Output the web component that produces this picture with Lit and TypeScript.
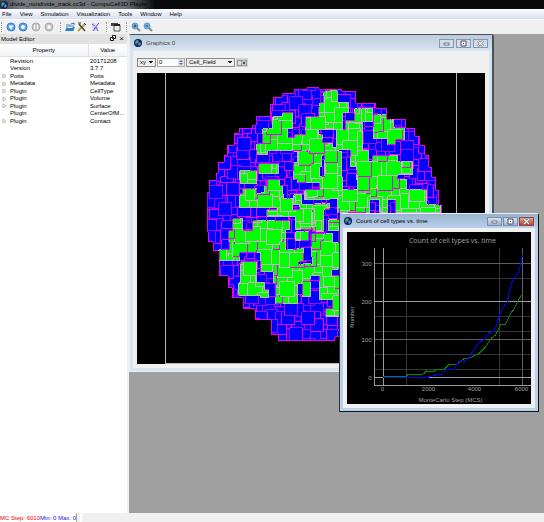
import { LitElement, html, svg, css } from "lit";
import { customElement } from "lit/decorators.js";

type Rect = [number, number, number, number];

// Green cell clusters as x1, y1, x2, y2 in lattice units.
const GREEN: Rect[] = [
  [283,113,293,129],[273,117,283,129],[263,129,288,150],[257,144,268,155],[268,138,297,151],[295,135,307,152],
  [306,117,319,135],[319,107,330,130],[324,92,330,108],[307,135,323,150],[298,152,320,183],[308,143,322,167],
  [294,163,300,180],[259,164,279,174],[240,171,257,184],[267,180,280,186],[265,186,283,195],[243,189,257,197],
  [240,194,261,208],[261,193,277,208],[277,195,284,210],[283,199,293,210],[294,195,302,205],[300,205,315,210],
  [315,204,330,210],[305,190,330,200],[325,91,338,103],[320,103,349,113],[320,113,343,130],[355,109,373,122],
  [346,121,363,133],[337,130,363,150],[374,115,394,128],[374,127,388,139],[388,128,405,140],[388,140,396,145],
  [320,143,333,156],[325,152,342,177],[332,148,339,155],[320,177,343,190],[351,150,369,167],[357,162,373,180],
  [373,156,398,180],[398,162,413,175],[358,180,407,190],[347,190,370,213],[370,190,427,200],[396,200,427,213],
  [427,205,441,213],[338,195,347,213],[320,190,347,199],[380,200,388,213],[267,210,312,217],[233,219,243,232],
  [229,231,257,242],[230,242,261,253],[219,250,240,261],[253,221,290,230],[253,229,286,241],[258,235,286,253],
  [261,250,299,272],[296,217,312,230],[296,232,309,241],[313,210,324,232],[312,234,333,257],[329,220,340,231],
  [313,243,340,270],[274,265,303,284],[276,284,298,304],[303,264,311,297],[307,265,332,276],[320,276,340,300],
  [326,309,340,317],[333,298,340,310],[241,262,257,283],[239,283,265,296],[261,290,269,298],[297,249,304,262],
];

// Stepped silhouette of the colony: from row y on, the edge is at x.
const LEFT = [[87,307],[89,294],[93,282],[97,273],[104,270],[116,256],[125,252],[128,239],[133,234],[145,227],[155,224],[162,218],[173,216],[180,209],[192,207],[232,208],[242,213],[251,219],[276,228],[288,232],[298,243],[309,255],[320,271],[335,278]];
const RIGHT = [[87,318],[89,341],[91,355],[103,375],[108,386],[119,405],[128,414],[136,419],[145,424],[155,428],[167,431],[177,435],[190,438],[205,441],[260,436],[290,420],[310,395],[325,365],[337,334]];
const edge = (t: number[][], y: number) => {
  let x = t[0][1];
  for (const s of t) if (y >= s[0]) x = s[1];
  return x;
};

const X0 = 200, Y0 = 84, W = 246, H = 260;

// Lays blocks of one size over the lattice in random order; the last one on a pixel owns it.
function blocks(step: number, size: number, seed: number) {
  const rnd = () => ((seed = (seed * 16807) % 2147483647) / 2147483647);
  const all: Rect[] = [];
  for (let y = -step; y < H; y += step)
    for (let x = -step; x < W; x += step) {
      const px = Math.round(x + rnd() * 4), py = Math.round(y + rnd() * 4);
      all.push([px, py, px + size, py + size]);
    }
  for (let i = all.length - 1; i > 0; i--) {
    const j = Math.floor(rnd() * (i + 1));
    [all[i], all[j]] = [all[j], all[i]];
  }
  const own = new Int32Array(W * H);
  all.forEach((b, n) => {
    for (let y = Math.max(0, b[1]); y < Math.min(H, b[3]); y++)
      for (let x = Math.max(0, b[0]); x < Math.min(W, b[2]); x++) own[y * W + x] = n;
  });
  return own;
}

function colony() {
  const blue = blocks(9, 13, 7), green = blocks(11, 15, 21);
  const id = new Int32Array(W * H).fill(-1);
  for (let y = 0; y < H; y++) {
    const ay = y + Y0;
    if (ay < 87 || ay > 340) continue;
    const l = edge(LEFT, ay), r = edge(RIGHT, ay);
    for (let x = Math.max(0, l - X0); x < W && x + X0 <= r; x++) {
      const ax = x + X0, n = y * W + x;
      const g = GREEN.some((q) => ax >= q[0] && ax < q[2] && ay >= q[1] && ay < q[3]);
      id[n] = g ? green[n] * 2 + 1 : blue[n] * 2;
    }
  }
  const at = (x: number, y: number) => (x < 0 || y < 0 || x >= W || y >= H ? -1 : id[y * W + x]);
  const paths = ["", "", "", "", ""];
  for (let y = 0; y < H; y++) {
    let run = -1, start = 0;
    for (let x = 0; x <= W; x++) {
      let c = -1;
      const a = at(x, y);
      if (x < W && a >= 0) {
        c = a & 1;
        const near = [at(x + 1, y), at(x, y + 1)];
        if (at(x - 1, y) < 0) near.push(-1);
        if (at(x, y - 1) < 0) near.push(-1);
        const other = near.find((v) => v !== a);
        if (other !== undefined) {
          if (other < 0) c = 2;
          else if (a & 1) c = (a >> 1) % 6 ? 4 : 2;
          else if (other & 1) c = (a >> 1) % 2 ? 4 : 2;
          else c = (a >> 1) % 2 ? 3 : 2;
        }
      }
      if (c !== run) {
        if (run >= 0) paths[run] += `M${start + X0} ${y + Y0}h${x - start}v1h${start - x}z`;
        run = c;
        start = x;
      }
    }
  }
  const fills = ["#0000ff", "#00ff00", "#f000f0", "#9c08f0", "#c8b0c4"];
  return paths.map((d, i) => svg`<path d=${d} fill=${fills[i]}></path>`);
}
const COLONY = colony();

const globe = html`<svg class="globe" viewBox="0 0 8 8" aria-hidden="true"><circle cx="4" cy="4" r="4" fill="#0b2358"/><path d="M1 3l2-2 2 1-1 2-2 1z" fill="#4fae6c"/><path d="M4 5l2-2 1 2-2 2z" fill="#5d93da"/><circle cx="2" cy="5" r="1" fill="#2a6ec0"/></svg>`;

const round = (fill: string, ring: string, glyph: unknown) =>
  svg`<circle cx="5" cy="5" r="4" fill=${fill} stroke=${ring}></circle>${glyph}`;

const TOOLS: { name: string; start?: boolean; art: unknown }[] = [
  { name: "Play", start: true, art: round("#5a9ff2", "#3a7dd8", svg`<path d="M2.500 3.500h5L5 8z" fill="#fff"/>`) },
  { name: "Step", art: round("#5a9ff2", "#3a7dd8", svg`<circle cx="5" cy="5" r="2" fill="#fff"/>`) },
  { name: "Pause", art: round("#c6c6c6", "#ababab", svg`<path d="M3 3h1v4H3zM6 3h1v4H6z" fill="#fff"/>`) },
  { name: "Stop", art: round("#c6c6c6", "#ababab", svg`<rect x="3.500" y="3.500" width="3" height="3" fill="#fff"/>`) },
  { name: "Open", start: true, art: svg`<path d="M1 2h4l1 1h3v6H1z" fill="#8fb9e2"/><path d="M0 9l2-4h8L8 9z" fill="#2f7fd0"/><path d="M2.500 5.500h5" stroke="#fff"/><path d="M6 2l3-1v2" fill="none" stroke="#4466aa"/>` },
  { name: "Configure", art: svg`<path d="M1 9l7-7" stroke="#c19a3e" stroke-width="2"/><path d="M2 2l6 7" stroke="#444" stroke-width="1.500"/><path d="M1 1h3M7 1l2 2" stroke="#333"/>` },
  { name: "Edit", art: svg`<path d="M2 1h6v8H2z" fill="#dcd9f4"/><path d="M2 2l3 2M9 1L4 7M3 9l3-4 2 4" fill="none" stroke="#6952c8"/>` },
  { name: "New window", start: true, art: svg`<path d="M0 1h7v3H0z" fill="#444"/><path d="M3 3h6v6H3z" fill="#eee" stroke="#555"/><path d="M3 3h6" stroke="#222" stroke-width="2"/>` },
  { name: "Zoom in", start: true, art: svg`<circle cx="4" cy="4" r="3" fill="#77b2e2" stroke="#5c9ac9"/><path d="M2.500 4h3M4 2.500v3" stroke="#155082"/><path d="M6 6l3 3" stroke="#7e8990" stroke-width="2"/>` },
  { name: "Zoom out", art: svg`<circle cx="4" cy="4" r="3" fill="#77b2e2" stroke="#5c9ac9"/><path d="M2.500 4h3" stroke="#155082"/><path d="M6 6l3 3" stroke="#7e8990" stroke-width="2"/>` },
];

const MENUS = ["File", "View", "Simulation", "Visualization", "Tools", "Window", "Help"];
const ROWS: [boolean, string, string][] = [
  [false, "Revision", "20171208"], [false, "Version", "3.7.7"], [true, "Potts", "Potts"],
  [true, "Metadata", "Metadata"], [true, "Plugin", "CellType"], [true, "Plugin", "Volume"],
  [true, "Plugin", "Surface"], [false, "Plugin", "CenterOfM..."], [true, "Plugin", "Contact"],
];

@customElement("growth-chart")
export class GrowthChart extends LitElement {
  static styles = css`
    :host { display: block; background: #000; }
    svg { display: block; width: 100%; height: 100%; }
    text { font-family: "Liberation Sans", sans-serif; font-size: 6px; fill: #a0a0a0; }
    .title { font-family: "Open Sans", sans-serif; font-size: 7px; }
    .grid { shape-rendering: crispEdges; fill: none; stroke-width: 1px; }
    .dim { stroke: #363636; }
    .mid { stroke: #606060; }
    .bright { stroke: #9c9c9c; }
    .curve { fill: none; stroke-width: 1px; shape-rendering: crispEdges; }
  `;
  render() {
    return html`<svg viewBox="0 0 183 172" role="img" aria-label="Count of cell types vs. time">
      <path class="grid dim" d="M26 46.500h157M26 84.500h157M26 99.500h157M26 122.500h157M26 137.500h157M58.500 16v137M151.500 16v137"/>
      <path class="grid mid" d="M26 31.500h157M26 107.500h157M174.500 16v137"/>
      <path class="grid bright" d="M26.500 16v137M26 153.500h157M35.500 16v137M26 69.500h157M26 145.500h157"/>
      <polyline class="curve" stroke="#008a00" points="35,144 59,144 60,143 76,142 79,139 86,140 89,137 97,137 102,132 110,132 116,127 122,126 131,122 138,115 144,106 148,103 153,93 158,92 164,80 166,78 170,70 174,63"/>
      <polyline class="curve" stroke="#0000ff" points="35,145 81,145 88,143 96,142 98,138 107,137 111,130 117,129 122,125 126,118 131,111 137,107 141,101 147,99 151,86 155,76 160,69 164,51 169,43 172,38 175,23"/>
      <text class="title" x="105" y="11" text-anchor="middle">Count of cell types vs. time</text>
      <text x="24" y="34" text-anchor="end">300</text><text x="24" y="72" text-anchor="end">200</text>
      <text x="24" y="110" text-anchor="end">100</text><text x="24" y="148" text-anchor="end">0</text>
      <text x="35" y="159" text-anchor="middle">0</text><text x="81" y="159" text-anchor="middle">2000</text>
      <text x="127" y="159" text-anchor="middle">4000</text><text x="174" y="159" text-anchor="middle">6000</text>
      <text x="103" y="170" text-anchor="middle">MonteCarlo Step (MCS)</text>
      <text transform="translate(6 85) rotate(-90)" text-anchor="middle">Number</text>
    </svg>`;
  }
}

@customElement("app-root")
export class AppRoot extends LitElement {
  static styles = css`
    :host { display: flex; flex-direction: column; height: 100vh; overflow: hidden; background: #f0f0f0; color: #000; font: 6px/8px "Liberation Sans", sans-serif; }
    * { box-sizing: border-box; }
    button, input, select { font: inherit; color: inherit; margin: 0; padding: 0; border: 0; background: none; border-radius: 0; }
    .globe { width: 8px; height: 8px; flex: none; }
    .titlebar { display: flex; align-items: center; gap: 2px; height: 9px; background: linear-gradient(90deg, #44484c, #777b80 20px, #6c7074 125px, #0a0a0c 155px); }
    .titlebar h1 { margin: 0; font: inherit; white-space: nowrap; height: 9px; }
    .menus { display: flex; gap: 8px; height: 10px; padding: 0 2px; align-items: center; background: linear-gradient(#fbfcfe, #d8def0); }
    .tools { display: flex; align-items: center; height: 15px; background: #f0f0f0; border-top: 1px solid #fafafa; padding-left: 1px; }
    .tool { width: 10px; height: 10px; margin-left: 3px; flex: none; }
    .tool.start { margin-left: 6px; width: 14px; padding-left: 4px; border-left: 1px dotted #9a9a9a; }
    .tool.start:first-child { margin-left: 0; }
    .tool svg { display: block; width: 10px; height: 10px; }
    .body { display: flex; flex: 1; min-height: 0; }
    .editor { width: 127px; background: #fff; flex: none; margin-right: 2px; overflow: hidden; }
    .caption { display: flex; align-items: center; height: 10px; background: #e2e2e2; padding: 0 1px; }
    .caption h2 { margin: 0; font: inherit; flex: 1; }
    .caption button { width: 9px; font-size: 8px; line-height: 8px; }
    table { border-collapse: collapse; table-layout: fixed; width: 100%; }
    th { height: 12px; padding: 0; font-weight: normal; background: linear-gradient(#fff, #f1f2f4); border-bottom: 1px solid #dcdfe3; }
    th:first-child { width: 88px; border-right: 1px solid #dfe3e8; }
    td { padding: 0 0 0 2px; height: 7px; line-height: 7px; white-space: nowrap; }
    tr:nth-child(odd) td { height: 8px; line-height: 8px; }
    .arrow { display: inline-block; width: 8px; height: 6px; vertical-align: top; margin-top: 1px; }
    .desk { position: relative; flex: 1; background: #a0a0a0; overflow: hidden; }
    .win { position: absolute; display: flex; flex-direction: column; border: 1px solid #4a5058; border-radius: 3px 3px 0 0; }
    .graphics { left: 0; top: 0; width: 365px; height: 338px; padding: 0 3px 3px; background: #d7e4f2; border-width: 1px 2px 1px 1px; border-left-color: #e8eef4; border-bottom-color: #e8eef4; }
    .count { left: 210px; top: 179px; width: 200px; height: 199px; padding: 0 3px 3px; background: #b9d1ea; border-color: #e6f0fa #111 #111 #30343a; }
    .head { display: flex; align-items: center; gap: 4px; margin: 0 -3px; padding: 0 4px 0 4px; height: 14px; background: linear-gradient(#bccbdb, #d7e4f2); }
    .graphics .head { height: 16px; }
    .count .head { background: linear-gradient(#98b3d0, #b9d1ea); }
    .head h2 { margin: 0; flex: 1; font: inherit; }
    .graphics h2 { color: #444; }
    .controls { display: flex; gap: 2px; }
    .controls button { width: 15px; height: 9px; border: 1px solid #8796b5; background: #cfdcea; display: grid; place-items: center; }
    .controls svg { width: 7px; height: 7px; display: block; }
    .count .controls { gap: 1px; }
    .count .controls button { border-color: #7b8dab; background: linear-gradient(#d5e1f0, #a2b6d0); }
    .count .controls .close { background: linear-gradient(#e6a293, #c53d24); border-color: #8b4a4a; }
    .pane { flex: 1; background: #f0f0f0; min-height: 0; display: flex; flex-direction: column; }
    .fields { display: flex; align-items: center; height: 22px; padding: 0 4px; gap: 1px; }
    .fields > * { height: 9px; }
    .fields select { appearance: none; border: 1px solid #8b8b8b; background: linear-gradient(45deg, transparent 50%, #222 50%) no-repeat right 4px top 2px / 2px 3px, linear-gradient(-45deg, transparent 50%, #222 50%) no-repeat right 2px top 2px / 2px 3px, #efefef; padding: 0 0 0 2px; line-height: 7px; }
    .plane { width: 19px; }
    .field { width: 49px; }
    .spin { display: flex; width: 28px; background: #fff; border: 1px solid #aaa; }
    .spin input { flex: 1; min-width: 0; padding-left: 1px; height: 7px; line-height: 7px; outline: none; }
    .spin svg { width: 6px; height: 7px; background: #dde2ea; }
    .camera { width: 12px; background: #d2d2d2; }
    .camera svg { display: block; width: 12px; height: 9px; }
    .canvas { display: block; flex: 1; min-height: 0; margin: 0 4px 4px; background: #000; shape-rendering: crispEdges; }
    growth-chart { flex: 1; min-height: 0; margin: 4px; }
    .status { display: flex; height: 9px; line-height: 10px; white-space: nowrap; }
    .status span { background: #fff; }
    .step { color: #f00000; }
    .range { color: #1010e8; border-right: 1px solid #aaa; }
    .edge { width: 2px; margin-left: 3px; }
  `;

  private controls() {
    return html`<div class="controls">
      <button aria-label="Minimize"><svg viewBox="0 0 7 7"><path d="M1 3h5v2H1z" fill="#fff" stroke="#555b6e" stroke-width=".8"/></svg></button>
      <button aria-label="Maximize"><svg viewBox="0 0 7 7"><path d="M1 1h5v5H1z" fill="#fff" stroke="#4b4f5e"/><path d="M3 3h1v1H3z" fill="#4b4f5e"/></svg></button>
      <button class="close" aria-label="Close"><svg viewBox="0 0 7 7"><path d="M1 1l5 5M6 1L1 6" stroke="#555b6e" stroke-width="2.400"/><path d="M1 1l5 5M6 1L1 6" stroke="#fff" stroke-width="1.200"/></svg></button>
    </div>`;
  }

  render() {
    return html`
      <header class="titlebar">${globe}<h1>divide_nondivide_track.cc3d - CompuCell3D Player</h1></header>
      <nav class="menus">${MENUS.map((m) => html`<button>${m}</button>`)}</nav>
      <div class="tools">${TOOLS.map((t) => html`<button class="tool ${t.start ? "start" : ""}" aria-label=${t.name}><svg viewBox="0 0 10 10">${t.art}</svg></button>`)}</div>
      <div class="body">
        <aside class="editor">
          <div class="caption"><h2>Model Editor</h2><button aria-label="Float"><svg width="6" height="6" viewBox="0 0 6 6"><path d="M2.500.5h3v3h-3zM.5 2.500h3v3h-3z" fill="#fff" stroke="#111"/></svg></button><button aria-label="Close">×</button></div>
          <table>
            <thead><tr><th>Property</th><th>Value</th></tr></thead>
            <tbody>${ROWS.map(([open, name, value]) => html`<tr><td><svg class="arrow" viewBox="0 0 8 6" aria-hidden="true">${open ? svg`<path d="M1 1l3 2-3 2z" fill="#fff" stroke="#999" stroke-width=".7"/>` : ""}</svg>${name}</td><td>${value}</td></tr>`)}</tbody>
          </table>
        </aside>
        <main class="desk">
          <section class="win graphics">
            <div class="head">${globe}<h2>Graphics 0</h2>${this.controls()}</div>
            <div class="pane">
              <div class="fields">
                <select class="plane" aria-label="Plane"><option>xy</option></select>
                <div class="spin"><input aria-label="Slice" value="0"><svg viewBox="0 0 6 7" aria-hidden="true"><path d="M1 3l2-2 2 2zM1 4h4L3 6z" fill="#5570a0"/></svg></div>
                <select class="field" aria-label="Field"><option>Cell_Field</option></select>
                <button class="camera" aria-label="Screenshot"><svg viewBox="0 0 12 9"><path d="M1 2h10v6H1z" fill="#8f9297"/><path d="M2 3h3v4H2z" fill="#ddd"/><circle cx="8" cy="5" r="2" fill="#445566" stroke="#eee"/></svg></button>
              </div>
              <svg class="canvas" viewBox="137 73 348 291" preserveAspectRatio="xMinYMin slice" role="img" aria-label="Cell field">
                ${COLONY}
                <path d="M165.500 73v290.500h291V73" fill="none" stroke="#b4b4b4"/>
              </svg>
            </div>
          </section>
          <section class="win count">
            <div class="head">${globe}<h2>Count of cell types vs. time</h2>${this.controls()}</div>
            <div class="pane"><growth-chart></growth-chart></div>
          </section>
        </main>
      </div>
      <footer class="status"><span class="step">MC Step: 6010</span><span class="range">Min: 0 Max: 0</span><span class="edge"></span></footer>
    `;
  }
}
